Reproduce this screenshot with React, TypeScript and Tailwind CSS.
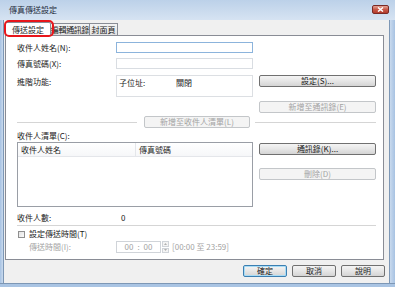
import React from 'react';

const font = "font-['Noto_Sans_CJK_TC','Noto_Sans_CJK_SC',sans-serif]";

function Btn({ label, disabled, width, isDefault }: { label: string; disabled?: boolean; width: string; isDefault?: boolean }) {
  if (disabled) {
    return (
      <div className={`${width} h-[12px] flex items-center justify-center rounded-[2px] border border-[#c3c6c9] bg-[#f4f4f4] text-[#a3a3a3]`}>
        {label}
      </div>
    );
  }
  return (
    <div
      className={`${width} h-[12px] flex items-center justify-center rounded-[2px] border ${
        isDefault ? 'border-[#3c7fb1] shadow-[inset_0_0_0_1px_#a8dcf6]' : 'border-[#707070]'
      } bg-gradient-to-b from-[#f4f4f4] via-[#e6e6e6] to-[#d4d4d4] text-[#1a1a1a]`}
    >
      {label}
    </div>
  );
}

function Label({ children, width = 'w-[99px]', muted }: { children: React.ReactNode; width?: string; muted?: boolean }) {
  return <div className={`${width} shrink-0 whitespace-nowrap ${muted ? 'text-[#a3a3a3]' : ''}`}>{children}</div>;
}

export default function App() {
  return (
    <div className={`${font} text-[8px] leading-none text-[#1a1a1a] w-[395px] h-[287px] flex flex-col bg-gradient-to-b from-[#b9cfe8] to-[#a7c3e3] overflow-hidden`}>
      {/* title bar */}
      <div className="h-[20px] shrink-0 flex items-center pl-[9px] pr-[6px] bg-gradient-to-b from-[#bcd1e9] to-[#d6e3f2]">
        <span className="text-[#1e2a3a] text-[8px]">傳真傳送設定</span>
        <div className="ml-auto mb-[2px] w-[17px] h-[9px] rounded-[2px] border border-[#7a2a26] bg-gradient-to-b from-[#e3a497] via-[#c85848] to-[#b33c2c] flex items-center justify-center">
          <svg width="7" height="5" viewBox="0 0 7 5">
            <path d="M1 0.5 L6 4.5 M6 0.5 L1 4.5" stroke="#ffffff" strokeWidth="1.5" />
          </svg>
        </div>
      </div>

      <div className="flex flex-1 min-h-0">
        <div className="w-[4px] shrink-0 bg-gradient-to-r from-[#a7c2e2] to-[#c9daee] border-r border-[#7d97b5]" />
        <div className="flex-1 flex flex-col bg-[#f0f0f0] pl-[1px]">
          {/* tabs */}
          <div className="h-[15px] flex items-end pt-[1px] relative z-10">
            <div className="w-[46px] h-[14px] -mb-[1px] bg-white border border-[#898c95] border-b-0 rounded-t-[2px] flex items-center justify-center">
              傳送設定
            </div>
            <div className="w-[39px] h-[12px] bg-gradient-to-b from-[#f3f3f3] to-[#e3e3e3] border border-[#898c95] border-b-0 border-l-0 flex items-center justify-center whitespace-nowrap overflow-hidden tracking-[-0.3px]">
              編輯通訊錄
            </div>
            <div className="w-[28px] h-[12px] bg-gradient-to-b from-[#f3f3f3] to-[#e3e3e3] border border-[#898c95] border-b-0 border-l-0 flex items-center justify-center">
              封面頁
            </div>
            <div className="absolute left-[-1px] top-0 w-[50px] h-[17px] rounded-[5px] border-2 border-[#e8161b]" />
          </div>

          {/* panel */}
          <div className="w-[379px] h-[225px] border border-[#898c95] bg-white pl-[11px] flex flex-col">
            <div className="flex items-center mt-[6px] h-[11px]">
              <Label>收件人姓名(N):</Label>
              <div className="w-[137px] h-[11px] border border-[#8cb4dc] bg-white" />
            </div>
            <div className="flex items-center mt-[5px] h-[11px]">
              <Label>傳真號碼(X):</Label>
              <div className="w-[137px] h-[11px] border border-[#d9dde2] bg-white" />
            </div>
            <div className="flex mt-[6px]">
              <Label>
                <div className="pt-[3px]">進階功能:</div>
              </Label>
              <div className="w-[137px] h-[22px] border border-[#dcdfe3] bg-white flex pt-[3px] pl-[2px]">
                <span className="w-[57px]">子位址:</span>
                <span>關閉</span>
              </div>
              <div className="ml-[6px]">
                <Btn label="設定(S)..." width="w-[117px]" />
                <div className="mt-[14px]">
                  <Btn label="新增至通訊錄(E)" width="w-[117px]" disabled />
                </div>
              </div>
            </div>
            <div className="flex items-center mt-[3px] h-[12px]">
              <div className="w-[120px] h-px bg-[#d5d5d5]" />
              <div className="ml-[7px]">
                <Btn label="新增至收件人清單(L)" width="w-[106px]" disabled />
              </div>
              <div className="ml-[5px] w-[121px] h-px bg-[#d5d5d5]" />
            </div>
            <div className="mt-[3px] h-[10px] flex items-center">收件人清單(C):</div>
            <div className="flex mt-[1px]">
              <div className="w-[236px] h-[65px] border border-[#9a9ea6] bg-white">
                <div className="h-[14px] flex bg-gradient-to-b from-white to-[#f6f7f9] border-b border-[#e4e6ea]">
                  <div className="w-[118px] pl-[3px] flex items-center border-r border-[#e4e6ea]">收件人姓名</div>
                  <div className="pl-[3px] flex items-center">傳真號碼</div>
                </div>
              </div>
              <div className="ml-[6px] pt-[1px]">
                <Btn label="通訊錄(K)..." width="w-[117px]" />
                <div className="mt-[13px]">
                  <Btn label="刪除(D)" width="w-[117px]" disabled />
                </div>
              </div>
            </div>
            <div className="flex items-center mt-[6px] h-[10px]">
              <Label width="w-[104px]">收件人數:</Label>
              <span>0</span>
            </div>
            <div className="mt-[2px] w-[359px] h-px bg-[#d5d5d5]" />
            <div className="flex items-center mt-[4px] h-[8px]">
              <div className="ml-[1px] w-[7px] h-[7px] border border-[#8f8f8f] bg-gradient-to-br from-[#e2e2e2] to-[#fafafa]" />
              <span className="ml-[4px]">設定傳送時間(T)</span>
            </div>
            <div className="flex items-center mt-[3px] h-[12px]">
              <Label muted width="w-[99px]">
                <span className="pl-[12px]">傳送時間(I):</span>
              </Label>
              <div className="w-[45px] h-[12px] border border-[#d0d4d9] bg-white text-[#a3a3a3] flex items-center justify-center gap-[4px]">
                <span>00</span>
                <span>:</span>
                <span>00</span>
              </div>
              <div className="ml-[1px] w-[7px] h-[12px] flex flex-col gap-px">
                <div className="flex-1 border border-[#d0d4d9] bg-[#f4f4f4] flex items-center justify-center">
                  <svg width="3" height="2" viewBox="0 0 3 2"><path d="M0 2 L1.5 0 L3 2 Z" fill="#b0b0b0" /></svg>
                </div>
                <div className="flex-1 border border-[#d0d4d9] bg-[#f4f4f4] flex items-center justify-center">
                  <svg width="3" height="2" viewBox="0 0 3 2"><path d="M0 0 L1.5 2 L3 0 Z" fill="#b0b0b0" /></svg>
                </div>
              </div>
              <span className="ml-[3px] text-[#a3a3a3]">[00:00 至 23:59]</span>
            </div>
          </div>

          {/* dialog buttons */}
          <div className="flex justify-end gap-[5px] pr-[4px] mt-[5px]">
            <Btn label="確定" width="w-[44px]" isDefault />
            <Btn label="取消" width="w-[44px]" />
            <Btn label="說明" width="w-[44px]" />
          </div>
        </div>
        <div className="w-[6px] shrink-0 border-l border-[#7d97b5] bg-gradient-to-r from-[#c9daee] to-[#a7c2e2]" />
      </div>
      <div className="h-[4px] shrink-0 border-t border-[#7d97b5] bg-[#a9c4e3]" />
    </div>
  );
}
